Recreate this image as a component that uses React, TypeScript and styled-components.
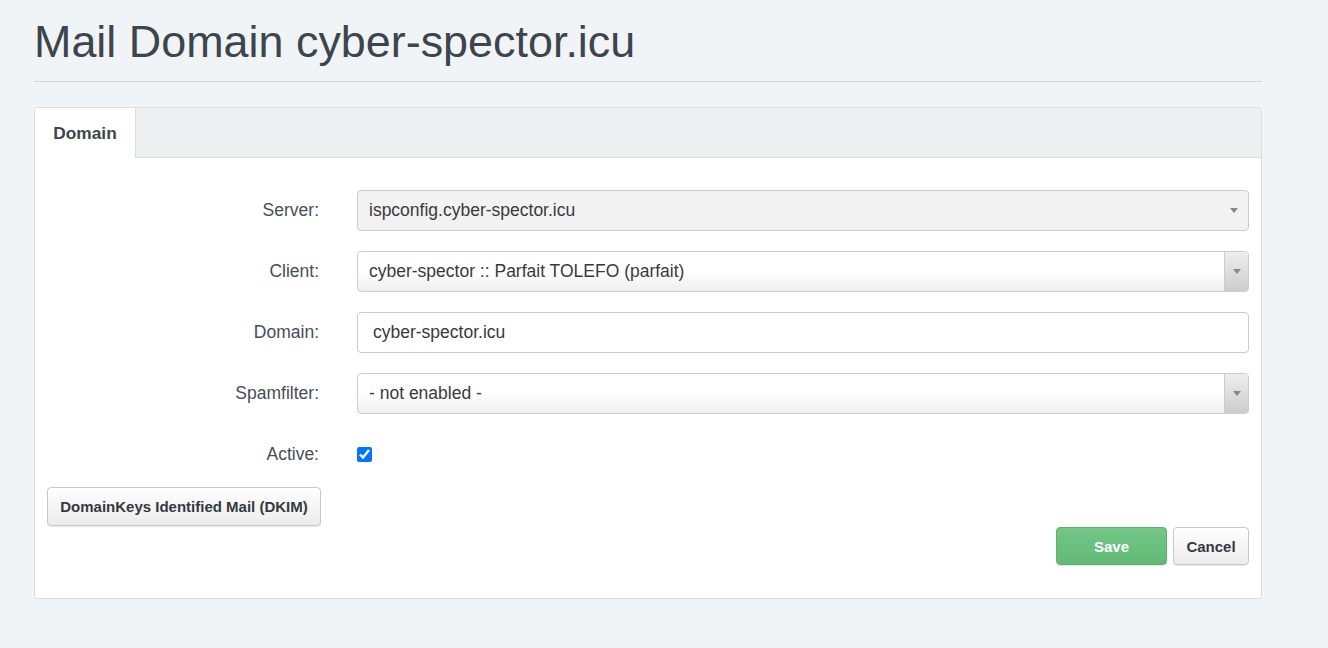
import React from "react";
import styled, { createGlobalStyle } from "styled-components";

const Global = createGlobalStyle`
  html, body { margin: 0; padding: 0; background: #f0f4f7; }
  body { font-family: "Liberation Sans", Arial, sans-serif; color: #333; }
`;

const Page = styled.div`
  padding: 14px 66px 40px 34px;
  width: 1228px;
`;

const Title = styled.h1`
  margin: 0;
  font-size: 44.9px;
  font-weight: 400;
  line-height: 56px;
  color: #3c454c;
  padding-bottom: 11px;
  border-bottom: 1px solid #d2d6da;
`;

const Card = styled.div`
  margin-top: 25px;
  background: #fff;
  border: 1px solid #dcdcdc;
  border-radius: 4px;
  overflow: hidden;
`;

const TabBar = styled.div`
  display: flex;
  height: 49px;
  background: #eeeff1;
  border-bottom: 1px solid #dcdcdc;
`;

const Tab = styled.div<{ $active?: boolean }>`
  width: 101px;
  display: flex;
  align-items: center;
  justify-content: center;
  font-size: 17.3px;
  font-weight: 700;
  color: #3c454c;
  background: ${(p) => (p.$active ? "#fff" : "transparent")};
  border-right: 1px solid #dcdcdc;
  margin-bottom: -1px;
  box-sizing: border-box;
`;

const Body = styled.div`
  padding: 32px 12px 33px 12px;
`;

const Form = styled.div`
  display: grid;
  grid-template-columns: 272px 1fr;
  column-gap: 38px;
  row-gap: 20px;
`;

const Label = styled.div`
  height: 41px;
  display: flex;
  align-items: center;
  justify-content: flex-end;
  font-size: 17.5px;
  color: #474e55;
`;

const Field = styled.div`
  height: 41px;
  display: flex;
  align-items: center;
`;

const Box = styled.div<{ $disabled?: boolean }>`
  position: relative;
  box-sizing: border-box;
  width: 100%;
  height: 41px;
  border: 1px solid #cccccc;
  border-radius: 4px;
  display: flex;
  align-items: center;
  padding-left: 11px;
  font-size: 17.5px;
  color: #3a3a3a;
  background: ${(p) =>
    p.$disabled ? "#f2f2f2" : "linear-gradient(to bottom, #ffffff 50%, #eeeeee 100%)"};
`;

const TextInput = styled(Box)`
  background: #fff;
  padding-left: 15px;
`;

const ArrowCell = styled.div<{ $sep?: boolean }>`
  position: absolute;
  top: 0;
  right: 0;
  bottom: 0;
  width: ${(p) => (p.$sep ? 23 : 18)}px;
  display: flex;
  align-items: center;
  justify-content: ${(p) => (p.$sep ? "center" : "flex-start")};
  border-left: ${(p) => (p.$sep ? "1px solid #cccccc" : "none")};
  border-radius: 0 3px 3px 0;
  background: ${(p) =>
    p.$sep ? "linear-gradient(to bottom, #eeeeee 0%, #cccccc 100%)" : "transparent"};
`;

const Arrow = () => (
  <svg width="8" height="5" viewBox="0 0 8 5">
    <path d="M0 0 L8 0 L4 5 Z" fill="#888" />
  </svg>
);

const Check = styled.input`
  margin: 0;
  width: 15px;
  height: 15px;
  accent-color: #0075ff;
`;

const Button = styled.button<{ $primary?: boolean }>`
  box-sizing: border-box;
  font-family: "Liberation Sans", Arial, sans-serif;
  font-size: 15px;
  font-weight: 700;
  border-radius: 4px;
  cursor: pointer;
  padding: 0 12px;
  color: ${(p) => (p.$primary ? "#fff" : "#333a40")};
  border: 1px solid ${(p) => (p.$primary ? "#5cb270" : "#c8c8c8")};
  background: ${(p) =>
    p.$primary
      ? "linear-gradient(to bottom, #74c686 0%, #62ba76 100%)"
      : "linear-gradient(to bottom, #ffffff 0%, #ececec 100%)"};
  box-shadow: 0 1px 1px rgba(0, 0, 0, 0.1);
`;

const DkimButton = styled(Button)`
  margin-top: 12px;
  height: 39px;
  width: 274px;
`;

const Actions = styled.div`
  display: flex;
  justify-content: flex-end;
  gap: 6px;
  margin-top: 1px;
`;

const ActionButton = styled(Button)<{ $w: number }>`
  height: 38px;
  width: ${(p) => p.$w}px;
`;

export default function App() {
  return (
    <>
      <Global />
      <Page>
        <Title>Mail Domain cyber-spector.icu</Title>
        <Card>
          <TabBar>
            <Tab $active>Domain</Tab>
          </TabBar>
          <Body>
            <Form>
              <Label>Server:</Label>
              <Field>
                <Box $disabled>
                  ispconfig.cyber-spector.icu
                  <ArrowCell>
                    <Arrow />
                  </ArrowCell>
                </Box>
              </Field>
              <Label>Client:</Label>
              <Field>
                <Box>
                  cyber-spector :: Parfait TOLEFO (parfait)
                  <ArrowCell $sep>
                    <Arrow />
                  </ArrowCell>
                </Box>
              </Field>
              <Label>Domain:</Label>
              <Field>
                <TextInput>cyber-spector.icu</TextInput>
              </Field>
              <Label>Spamfilter:</Label>
              <Field>
                <Box>
                  - not enabled -
                  <ArrowCell $sep>
                    <Arrow />
                  </ArrowCell>
                </Box>
              </Field>
              <Label>Active:</Label>
              <Field>
                <Check type="checkbox" defaultChecked />
              </Field>
            </Form>
            <DkimButton>DomainKeys Identified Mail (DKIM)</DkimButton>
            <Actions>
              <ActionButton $primary $w={111}>
                Save
              </ActionButton>
              <ActionButton $w={76}>Cancel</ActionButton>
            </Actions>
          </Body>
        </Card>
      </Page>
    </>
  );
}
